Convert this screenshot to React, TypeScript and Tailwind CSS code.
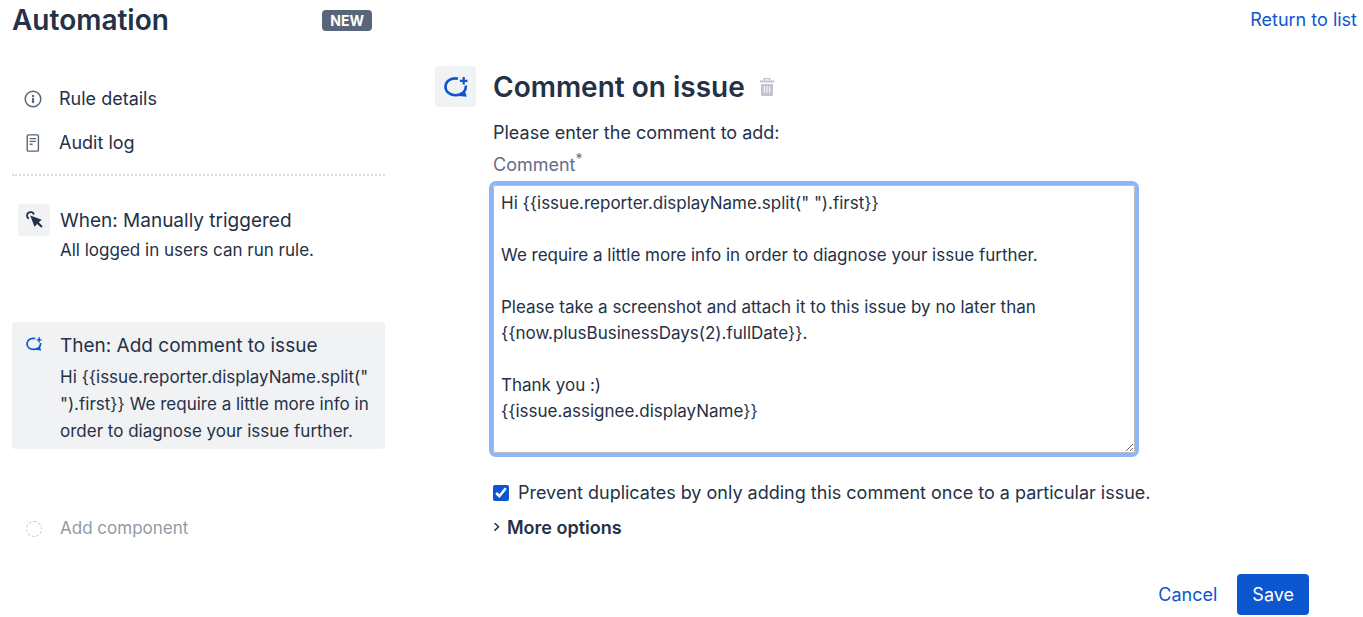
import { useState } from "react";

function CommentIcon({ className }: { className: string }) {
  return (
    <svg viewBox="0 0 24 20" className={className} fill="none" stroke="currentColor" strokeWidth="2.6" aria-hidden="true">
      <path d="M14 1.700C12.800 1.400 11.800 1.400 11 1.400C5.600 1.400 1.500 5 1.500 9.800S5.600 18.200 11.500 18.200C14 18.200 16 17.600 18 16.500" />
      <path d="M22 8.500C22 11.500 21.200 13.600 19.400 15.600" />
      <path d="M19.700 0v7.600M15.900 3.800h7.600" strokeWidth="2.200" />
      <path d="M16.600 15.600L20.800 13.800L22.800 19.800L15.200 19z" fill="currentColor" stroke="none" />
    </svg>
  );
}

function InfoIcon() {
  return (
    <svg viewBox="0 0 18 18" className="size-[18px]" fill="none" stroke="currentColor" aria-hidden="true">
      <circle cx="9" cy="9" r="7.8" strokeWidth="1.5" />
      <circle cx="9" cy="5.9" r="1.2" fill="currentColor" stroke="none" />
      <path d="M9 8.800v3.400" strokeWidth="2.200" strokeLinecap="round" />
    </svg>
  );
}

function LogIcon() {
  return (
    <svg viewBox="0 0 18 18" className="size-[18px]" fill="none" stroke="currentColor" strokeWidth="1.4" aria-hidden="true">
      <rect x="3.2" y="0.9" width="11.2" height="16.2" rx="1.2" />
      <path d="M5.6 4.6h6.4M5.6 7.4h6.4M5.6 10.2h3" />
    </svg>
  );
}

function ClickIcon() {
  return (
    <svg viewBox="0 0 18 18" className="size-[18px]" aria-hidden="true">
      <path d="M3.800 7.600A3.500 3.500 0 1 1 8.900 3.600" fill="none" stroke="currentColor" strokeWidth="1.8" />
      <path d="M5.2 4.6l11.600 4.200-3 2.500 3.800 4-1.400 1.400-4-3.800-2.700 2.800z" fill="currentColor" />
    </svg>
  );
}

function TrashIcon() {
  return (
    <svg viewBox="0 0 16 20" className="h-5 w-4" aria-hidden="true">
      <path d="M5.2 3.4V1.600h5.600v1.800" fill="none" stroke="currentColor" strokeWidth="1.4" />
      <path d="M0.800 3.400h14.400v2H0.800zM2 7h12v10.400c0 .9-.6 1.600-1.400 1.600H3.400C2.600 19 2 18.300 2 17.400z" fill="currentColor" />
      <path d="M5.300 9.200v6.600M8 9.200v6.600M10.700 9.200v6.600" stroke="white" strokeWidth="1" />
    </svg>
  );
}

const initialComment = `Hi {{issue.reporter.displayName.split(" ").first}}

We require a little more info in order to diagnose your issue further.

Please take a screenshot and attach it to this issue by no later than {{now.plusBusinessDays(2).fullDate}}.

Thank you :)
{{issue.assignee.displayName}}`;

const summary =
  'Hi {{issue.reporter.displayName.split(" ").first}} We require a little more info in order to diagnose your issue further.';

export default function App() {
  const [comment, setComment] = useState(initialComment);
  const [prevent, setPrevent] = useState(true);

  return (
    <div className="flex bg-white pl-3 font-['Inter',sans-serif] text-[17px] text-[#253147]">
      <aside className="w-[373px] shrink-0">
        <header className="flex h-10 items-center justify-between pr-[13px]">
          <h1 className="text-[28px] font-semibold">Automation</h1>
          <span className="rounded-[4px] bg-[#596579] px-2 text-sm leading-[21px] font-bold text-white">NEW</span>
        </header>
        <nav className="mt-[37px] border-b-2 border-dotted border-[#d9dce2] pb-[9px] text-lg">
          <a href="#details" className="flex h-11 items-center gap-[17px] pl-3">
            <span className="text-[#596579]"><InfoIcon /></span>
            Rule details
          </a>
          <a href="#audit" className="flex h-11 items-center gap-[17px] pl-3">
            <span className="text-[#596579]"><LogIcon /></span>
            Audit log
          </a>
        </nav>
        <ol>
          <li className="mt-7 flex gap-[10px] pl-[6px]">
            <span className="flex size-8 shrink-0 items-center justify-center rounded-[4px] bg-[#f1f2f4]"><ClickIcon /></span>
            <div>
              <h2 className="text-[19px] leading-[34px]">When: Manually triggered</h2>
              <p className="leading-6">All logged in users can run rule.</p>
            </div>
          </li>
          <li className="mt-[60px] flex gap-[10px] rounded-[4px] bg-[#f1f2f4] pt-[6px] pb-1 pl-[6px]">
            <span className="flex size-8 shrink-0 items-center justify-center text-[#0c56d0]"><CommentIcon className="h-[14px] w-4" /></span>
            <div>
              <h2 className="text-[19px] leading-9">Then: Add comment to issue</h2>
              <p className="leading-[27px]">{summary}</p>
            </div>
          </li>
        </ol>
        <button type="button" className="mt-16 flex h-8 items-center gap-[18px] pl-[14px] text-[#9299a6]">
          <span className="size-4 rounded-full border border-dashed border-[#c5c9d2]" />
          Add component
        </button>
      </aside>
      <main className="ml-[50px] flex min-w-0 flex-1 flex-col">
        <div className="flex h-10 items-center justify-end pr-[6px]">
          <a href="#list" className="text-lg text-[#0c56d0]">Return to list</a>
        </div>
        <div className="mt-[26px] flex h-[41px] items-center">
          <span className="flex size-[41px] shrink-0 items-center justify-center rounded-[4px] bg-[#f1f2f4] text-[#0c56d0]"><CommentIcon className="h-5 w-6" /></span>
          <h2 className="ml-[17px] text-[28px] font-semibold">Comment on issue</h2>
          <button type="button" aria-label="Delete component" className="ml-[14px] text-[#c1c4cd]"><TrashIcon /></button>
        </div>
        <form className="pl-[58px] text-lg" onSubmit={(e) => e.preventDefault()}>
          <p className="mt-[10px] leading-8">Please enter the comment to add:</p>
          <label htmlFor="comment" className="block leading-8 text-[#626f86]">Comment<sup className="text-sm">*</sup></label>
          <textarea
            id="comment"
            value={comment}
            onChange={(e) => setComment(e.target.value)}
            className="mt-1 block h-[268px] w-full max-w-[642px] resize rounded-[3px] border border-[#b9bcc4] px-[7px] py-1 text-[17px] leading-[26px] ring-4 ring-[#8fb5f9] outline-none"
          />
          <div className="mt-6 flex h-8 items-center gap-[9px]">
            <input id="prevent" type="checkbox" checked={prevent} onChange={(e) => setPrevent(e.target.checked)} className="size-4 accent-[#0c56d0]" />
            <label htmlFor="prevent">Prevent duplicates by only adding this comment once to a particular issue.</label>
          </div>
          <button type="button" className="mt-[3px] flex h-8 items-center gap-1 font-semibold">
            <svg viewBox="0 0 10 10" className="size-[10px]" fill="none" stroke="currentColor" strokeWidth="1.5" aria-hidden="true"><path d="M1.500 0l4 3.800-4 3.800" /></svg>
            More options
          </button>
          <div className="mt-[30px] flex items-center justify-end gap-5 pr-[54px]">
            <button type="button" className="text-[#0c56d0]">Cancel</button>
            <button type="submit" className="h-[41px] rounded-[4px] bg-[#0c56d0] px-[15px] text-white">Save</button>
          </div>
        </form>
      </main>
    </div>
  );
}
